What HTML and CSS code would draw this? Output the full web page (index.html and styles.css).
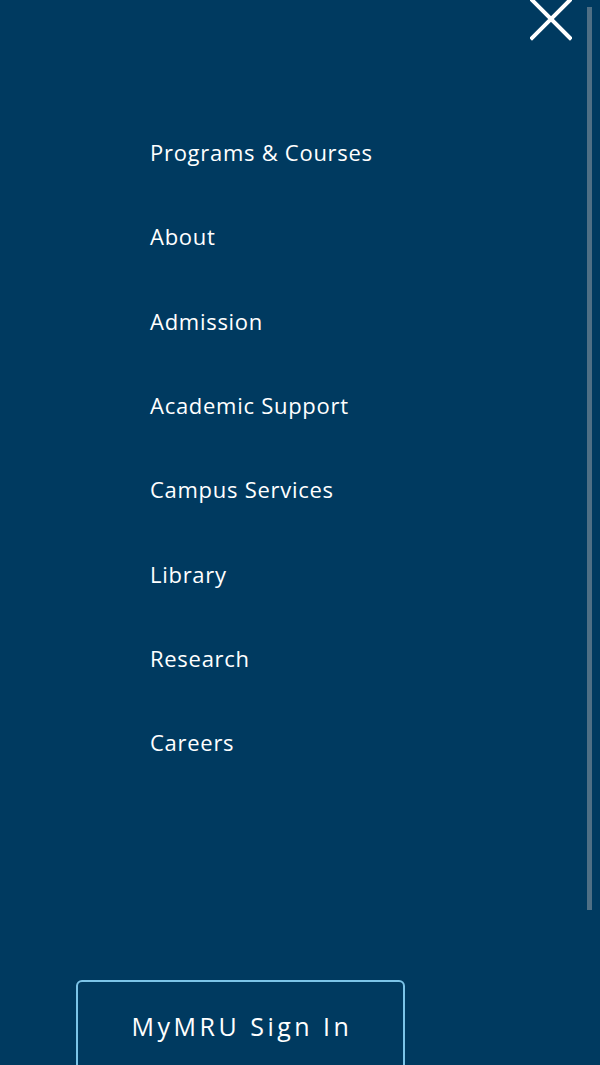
FILE: index.html
```html
<!DOCTYPE html>
<html lang="en">
<head>
    <meta charset="UTF-8">
    <meta name="viewport" content="width=device-width, initial-scale=1.0">
    <title>Menu</title>
    <link rel="stylesheet" href="styles.css">
</head>
<body>
    <div class="menu-panel">
        <div class="menu-header">
            <button class="close-btn" aria-label="Close menu">
                <svg width="42" height="42" viewBox="0 0 42 42">
                    <path d="M2 1 L40 39 M40 1 L2 39" stroke="#ffffff" stroke-width="4" stroke-linecap="square" fill="none"/>
                </svg>
            </button>
        </div>

        <ul class="main-nav">
            <li><a href="#">Programs &amp; Courses</a></li>
            <li><a href="#">About</a></li>
            <li><a href="#">Admission</a></li>
            <li><a href="#">Academic Support</a></li>
            <li><a href="#">Campus Services</a></li>
            <li><a href="#">Library</a></li>
            <li><a href="#">Research</a></li>
            <li><a href="#">Careers</a></li>
        </ul>

        <div class="signin">
            <a href="#" class="signin-btn">MyMRU Sign In</a>
        </div>

        <div class="scrollbar"></div>
    </div>
</body>
</html>
```

FILE: styles.css
```css
body {
    font-family: "Open Sans", "Noto Sans", sans-serif;
    background-color: #003a60;
    margin: 0;
    padding: 0;
}
.menu-panel {
    position: relative;
    height: 1065px;
    overflow: hidden;
}
.menu-header {
    display: flex;
    justify-content: flex-end;
    padding-right: 28px;
    height: 110px;
}
.close-btn {
    background: none;
    border: none;
    padding: 0;
    margin-top: -1px;
    width: 42px;
    height: 42px;
    cursor: pointer;
}
.close-btn svg {
    display: block;
}
.main-nav {
    list-style: none;
    margin: 0;
    padding: 0 0 0 150px;
}
.main-nav li {
    height: 84.3px;
    display: flex;
    align-items: center;
}
.main-nav a {
    color: #ffffff;
    text-decoration: none;
    font-size: 22px;
    font-weight: 500;
    letter-spacing: 0.72px;
}
.signin {
    padding: 196px 0 0 76px;
}
.signin-btn {
    display: flex;
    align-items: center;
    justify-content: center;
    box-sizing: border-box;
    width: 329px;
    height: 94px;
    padding: 0 0 2px 3px;
    border: 2px solid #7cc4e8;
    border-radius: 6px;
    color: #ffffff;
    text-decoration: none;
    font-size: 25px;
    font-weight: 500;
    letter-spacing: 3.5px;
}
.scrollbar {
    position: absolute;
    top: 7px;
    right: 8px;
    width: 5px;
    height: 903px;
    background-color: #4f6f85;
}
```
